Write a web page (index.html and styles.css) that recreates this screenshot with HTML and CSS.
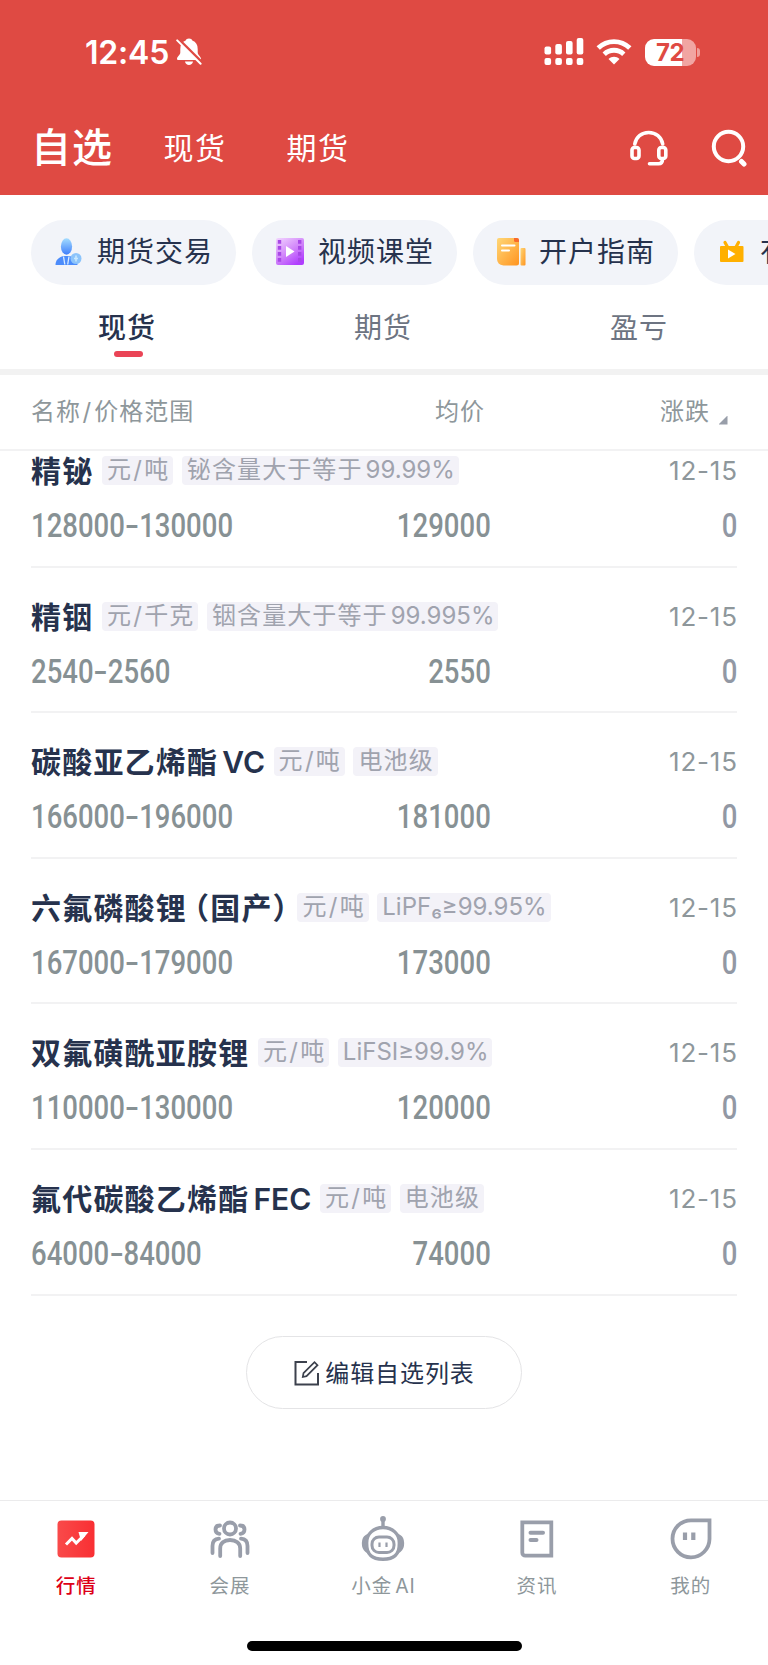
FILE: index.html
```html
<!DOCTYPE html>
<html lang="zh-CN">
<head>
    <meta charset="UTF-8">
    <meta name="viewport" content="width=device-width, initial-scale=1.0">
    <title>自选</title>
    <link rel="stylesheet" href="styles.css">
</head>
<body>
    <header class="header">
        <div class="status-bar">
            <span class="time">12:45</span>
            <svg class="bell" width="26" height="28" viewBox="0 0 26 28">
                <path d="M13 0.5c-1.8 0-3 .9-3.3 2.1C6 4 4.300 7 4.300 11v3.500c0 2.500-3.300 4-3.300 6.200 0 .8.5 1.300 1.400 1.300h21.200c.9 0 1.400-.5 1.400-1.300 0-2.200-3.300-3.700-3.300-6.200V11c0-4-1.700-7-5.400-8.400C16 1.400 14.800.5 13 .5zM9 23.500h8c-.3 2-2 3.500-4 3.500s-3.700-1.500-4-3.500z" fill="#fff"/>
                <path d="M2.800 1.500l24 24" stroke="#df4a43" stroke-width="3"/>
                <path d="M1.200 2.400l23.400 23.400" stroke="#fff" stroke-width="2" stroke-linecap="round"/>
            </svg>
            <svg class="signal" width="40" height="28" viewBox="0 0 40 28" fill="#fff">
                <rect x="0.500" y="8.500" width="6.600" height="8" rx="2"/>
                <rect x="11.300" y="6" width="6.600" height="10.500" rx="2"/>
                <rect x="22" y="3" width="6.600" height="13.500" rx="2"/>
                <rect x="32.700" y="0" width="6.600" height="16.500" rx="2"/>
                <rect x="0.500" y="20" width="6.600" height="7" rx="2"/>
                <rect x="11.300" y="20" width="6.600" height="7" rx="2"/>
                <rect x="22" y="20" width="6.600" height="7" rx="2"/>
                <rect x="32.700" y="20" width="6.600" height="7" rx="2"/>
            </svg>
            <svg class="wifi" width="36" height="26" viewBox="0 0 36 26">
                <path d="M2.200 9c9-8.600 22.600-8.600 31.600 0" fill="none" stroke="#fff" stroke-width="4.800"/>
                <path d="M8.200 15.200c5.600-5.300 14-5.300 19.600 0" fill="none" stroke="#fff" stroke-width="4.800"/>
                <path d="M12.500 20c3.200-3 7.800-3 11 0L18 25.500z" fill="#fff"/>
            </svg>
            <span class="battery">72</span>
            <span class="battery-cap"></span>
        </div>
        <nav class="main-nav">
            <a class="nav-item active">自选</a>
            <a class="nav-item">现货</a>
            <a class="nav-item">期货</a>
            <svg class="headset" width="38" height="38" viewBox="0 0 38 38" fill="none" stroke="#fff" stroke-width="3.600" stroke-linecap="round">
                <path d="M4.800 15C6 8 11.500 3.500 18.700 3.500S31.500 8 32.700 15"/>
                <rect x="2" y="18.500" width="7" height="11" rx="2.500"/>
                <rect x="28.800" y="18.500" width="7" height="11" rx="2.500"/>
                <path d="M32.500 30c0 3-1.500 4.800-4 4.800h-9"/>
            </svg>
            <svg width="38" height="38" viewBox="0 0 38 38" fill="none" stroke="#fff" stroke-width="4" stroke-linecap="round">
                <circle cx="18.500" cy="17.500" r="14.700"/>
                <path d="M31.500 32.500l2.500 2.500" stroke-width="5"/>
            </svg>
        </nav>
    </header>

    <section class="shortcuts">
        <a class="shortcut">
            <svg width="28" height="28" viewBox="0 0 28 28">
                <defs>
                    <linearGradient id="blue" x1="0" y1="0" x2="0" y2="1"><stop offset="0" stop-color="#a3dcff"/><stop offset="1" stop-color="#3f7efb"/></linearGradient>
                </defs>
                <ellipse cx="11.500" cy="8.500" rx="5.600" ry="8.200" fill="url(#blue)"/>
                <path d="M0.500 27c0-5 3-7.500 8-9h6c5 1.500 8 4 8 9z" fill="#4c8cfb"/>
                <path d="M8.500 18.500l1.300 8M14 18.500l-1.300 8" stroke="#d9ecff" stroke-width="1.300"/>
                <circle cx="21" cy="20.500" r="5.500" fill="#8cc4fb"/>
                <path d="M21 17.500v6M19 20.500h4" stroke="#c9e9ff" stroke-width="1.500"/>
            </svg>
            <span>期货交易</span>
        </a>
        <a class="shortcut">
            <svg width="28" height="28" viewBox="0 0 28 28">
                <defs>
                    <linearGradient id="purple" x1="0" y1="0" x2="0.700" y2="1"><stop offset="0" stop-color="#f3d6ff"/><stop offset="0.600" stop-color="#cf80fa"/><stop offset="1" stop-color="#b03dff"/></linearGradient>
                </defs>
                <rect width="28" height="27" rx="2" fill="url(#purple)"/>
                <path d="M3.500 2v24M23.700 2v24" stroke="#a848e6" stroke-width="3.400" stroke-dasharray="3.800 2.200"/>
                <path d="M10 8l8.500 5.500L10 19z" fill="#fff"/>
            </svg>
            <span>视频课堂</span>
        </a>
        <a class="shortcut">
            <svg width="30" height="28" viewBox="0 0 30 28">
                <defs>
                    <linearGradient id="orange" x1="0" y1="0" x2="1" y2="1"><stop offset="0" stop-color="#ffd777"/><stop offset="1" stop-color="#ff9420"/></linearGradient>
                </defs>
                <path d="M2 0h17.500a2.500 2.500 0 0 1 2.500 2.500V25a2.500 2.500 0 0 1-2.500 2.500H6.500Q0 26.500 0 21V2a2 2 0 0 1 2-2z" fill="url(#orange)"/>
                <path d="M17 0h3a2 2 0 0 1 2 2v2h-3.500A1.500 1.500 0 0 1 17 2.500z" fill="#f8692c"/>
                <path d="M5 7.500h12.500M5 12.500h7" stroke="#fff" stroke-width="2" stroke-linecap="round"/>
                <rect x="23.500" y="10" width="5" height="17.500" rx="1" fill="url(#orange)"/>
            </svg>
            <span>开户指南</span>
        </a>
        <a class="shortcut">
            <svg width="28" height="28" viewBox="0 0 28 28">
                <path d="M9.500 9L7 4.500M18 9l2.500-4.500" stroke="#ffb000" stroke-width="3.200" stroke-linecap="round"/>
                <rect x="2" y="8" width="23.500" height="16" rx="1" fill="#ffb000"/>
                <path d="M10 11.500l7.500 4.500-7.500 4.500z" fill="#fff"/>
            </svg>
            <span>有色直播</span>
        </a>
    </section>

    <nav class="tabs">
        <a class="tab active">现货</a>
        <a class="tab">期货</a>
        <a class="tab">盈亏</a>
    </nav>

    <div class="table-head">
        <span class="col-name">名称<i>/</i>价格范围</span>
        <span class="col-avg">均价</span>
        <span class="col-change">涨跌<b class="sort"></b></span>
    </div>

    <main class="list">
        <div class="item">
            <div class="title">
                <h2>精铋</h2>
                <span class="tag">元<i>/</i>吨</span>
                <span class="tag">铋含量大于等于<em>99.99%</em></span>
                <span class="date">12-15</span>
            </div>
            <div class="price">
                <span class="range">128000<i>-</i>130000</span>
                <span class="avg">129000</span>
                <span class="change">0</span>
            </div>
        </div>
        <div class="item">
            <div class="title">
                <h2>精铟</h2>
                <span class="tag">元<i>/</i>千克</span>
                <span class="tag">铟含量大于等于<em>99.995%</em></span>
                <span class="date">12-15</span>
            </div>
            <div class="price">
                <span class="range">2540<i>-</i>2560</span>
                <span class="avg">2550</span>
                <span class="change">0</span>
            </div>
        </div>
        <div class="item">
            <div class="title">
                <h2>碳酸亚乙烯酯<em>VC</em></h2>
                <span class="tag">元<i>/</i>吨</span>
                <span class="tag">电池级</span>
                <span class="date">12-15</span>
            </div>
            <div class="price">
                <span class="range">166000<i>-</i>196000</span>
                <span class="avg">181000</span>
                <span class="change">0</span>
            </div>
        </div>
        <div class="item">
            <div class="title">
                <h2>六氟磷酸锂<span class="paren">（</span>国产<span class="paren">）</span></h2>
                <span class="tag">元<i>/</i>吨</span>
                <span class="tag latin">LiPF₆≥99.95%</span>
                <span class="date">12-15</span>
            </div>
            <div class="price">
                <span class="range">167000<i>-</i>179000</span>
                <span class="avg">173000</span>
                <span class="change">0</span>
            </div>
        </div>
        <div class="item">
            <div class="title">
                <h2>双氟磺酰亚胺锂</h2>
                <span class="tag">元<i>/</i>吨</span>
                <span class="tag latin">LiFSI≥99.9%</span>
                <span class="date">12-15</span>
            </div>
            <div class="price">
                <span class="range">110000<i>-</i>130000</span>
                <span class="avg">120000</span>
                <span class="change">0</span>
            </div>
        </div>
        <div class="item">
            <div class="title">
                <h2>氟代碳酸乙烯酯<em>FEC</em></h2>
                <span class="tag">元<i>/</i>吨</span>
                <span class="tag">电池级</span>
                <span class="date">12-15</span>
            </div>
            <div class="price">
                <span class="range">64000<i>-</i>84000</span>
                <span class="avg">74000</span>
                <span class="change">0</span>
            </div>
        </div>
    </main>

    <button class="edit-btn">
        <svg width="26" height="26" viewBox="0 0 26 26" fill="none" stroke="#3c414d" stroke-width="2">
            <path d="M13 2H1.500v22.500H24V13"/>
            <path d="M9.500 13.200L20.500 2.200l3 3L12.500 16.200 8.800 17z" stroke-width="1.700"/>
        </svg>
        <span>编辑自选列表</span>
    </button>

    <footer class="tab-bar">
        <a class="bar-item active">
            <svg width="46" height="46" viewBox="0 0 46 46">
                <defs>
                    <linearGradient id="red" x1="0" y1="0" x2="1" y2="0"><stop offset="0" stop-color="#f94a4a"/><stop offset="1" stop-color="#f92f33"/></linearGradient>
                </defs>
                <rect x="4.500" y="4.500" width="37" height="37" rx="4" fill="url(#red)"/>
                <path d="M13 28.500l6-6 4.200 4.500 8-8" fill="none" stroke="#fff" stroke-width="3"/>
                <path d="M25.500 16H35.500L28 25z" fill="#fff"/>
            </svg>
            <span>行情</span>
        </a>
        <a class="bar-item">
            <svg width="46" height="46" viewBox="0 0 46 46" fill="none" stroke="#999eaa" stroke-width="3.800" stroke-linecap="round">
                <circle cx="23" cy="12.500" r="6"/>
                <path d="M13.200 40v-7.500C13.200 27 17 24 23 24s10.200 3 10.200 8.500V40"/>
                <path d="M13 9.500c-3 0-4.500 1.600-4.500 4s1.500 4 4 4.300M33 9.500c3 0 4.500 1.600 4.500 4s-1.500 4-4 4.300"/>
                <path d="M5.500 37v-7c0-4.500 2-7 6.500-7.300M40.500 37v-7c0-4.500-2-7-6.500-7.300"/>
            </svg>
            <span>会展</span>
        </a>
        <a class="bar-item">
            <svg width="46" height="46" viewBox="0 0 46 46" fill="none" stroke="#999eaa" stroke-width="3.400">
                <circle cx="23" cy="3" r="2.900" fill="#999eaa" stroke="none"/>
                <path d="M23 4v7"/>
                <path d="M6.500 20.500c-3.600 2-4.300 11 0 14zM39.500 20.500c3.600 2 4.300 11 0 14z" fill="#999eaa"/>
                <path d="M23 11.500c-9.500 0-16.500 6.500-16.500 15.500 0 12.500 6.500 16.300 16.500 16.300S39.500 39.500 39.500 27c0-9-7-15.500-16.500-15.500z"/>
                <rect x="12" y="21" width="22" height="15.500" rx="7" stroke-width="3"/>
                <path d="M19.500 26.500v4.500M26.500 26.500v4.500" stroke-width="2.200"/>
            </svg>
            <span>小金<em>AI</em></span>
        </a>
        <a class="bar-item">
            <svg width="46" height="46" viewBox="0 0 46 46" fill="none" stroke="#999eaa" stroke-width="3.800">
                <path d="M8.300 6.300h29v33.400h-26a3 3 0 0 1-3-3z"/>
                <path d="M16.500 16.800h12.500M16.500 24h6" stroke-width="4" stroke-linecap="round"/>
            </svg>
            <span>资讯</span>
        </a>
        <a class="bar-item">
            <svg width="46" height="46" viewBox="0 0 46 46" fill="none" stroke="#999eaa" stroke-width="3.800">
                <path d="M23 4.300h18.500V23A18.500 18.500 0 1 1 23 4.300z"/>
                <path d="M17 16.500v7.500M25.300 16.500v7.500" stroke-width="4.200"/>
            </svg>
            <span>我的</span>
        </a>
    </footer>
    <div class="home-indicator"></div>
</body>
</html>
```
FILE: styles.css
```css
* {
    box-sizing: border-box;
}

body {
    margin: 0;
    width: 768px;
    height: 1665px;
    overflow: hidden;
    display: flex;
    flex-direction: column;
    background-color: #fff;
    color: #26324d;
    font-family: 'Inter', 'Noto Sans CJK SC', sans-serif;
}

i, em, b {
    font-style: normal;
    font-weight: inherit;
}

svg {
    display: block;
    flex: none;
}

/* 顶部 */
.header {
    height: 195px;
    flex: none;
    background-color: #df4a43;
    color: #fff;
}

.status-bar {
    display: flex;
    align-items: center;
    height: 104px;
    padding: 0 68px 0 85px;
}

.time {
    font-size: 32px;
    font-weight: 600;
    letter-spacing: -0.2px;
}

.bell {
    margin-left: 7px;
}

.signal {
    margin-left: auto;
}

.wifi {
    margin-left: 12px;
}

.battery {
    width: 51px;
    height: 27px;
    margin-left: 13px;
    border-radius: 9px;
    background: linear-gradient(90deg, #fff 37px, #f1a5a2 37px);
    color: #df4a43;
    font-size: 24px;
    font-weight: 700;
    line-height: 28px;
    letter-spacing: -0.5px;
    text-align: center;
}

.battery-cap {
    width: 3.500px;
    height: 9px;
    margin-left: 1px;
    border-radius: 0 4px 4px 0;
    background-color: #ef9f9b;
}

.main-nav {
    display: flex;
    align-items: center;
    height: 88px;
    padding: 0 20px 0 31px;
}

.nav-item {
    margin-right: 60px;
    font-size: 30px;
    font-weight: 400;
    letter-spacing: 1.500px;
    line-height: 44px;
}

.nav-item.active {
    margin-right: 50.500px;
    font-size: 40px;
    font-weight: 500;
    letter-spacing: 1px;
}

.headset {
    margin-left: auto;
    margin-right: 42px;
}

/* 快捷入口 */
.shortcuts {
    display: flex;
    flex: none;
    gap: 16.500px;
    padding: 24.500px 0 0 31px;
    overflow: hidden;
}

.shortcut {
    display: flex;
    align-items: center;
    flex: none;
    width: 204.500px;
    height: 65.500px;
    padding-left: 23.500px;
    border-radius: 33px;
    background-color: #f2f4f9;
    font-size: 28px;
    letter-spacing: 1px;
    line-height: 40px;
    white-space: nowrap;
}

.shortcut span {
    width: 120px;
    margin-left: auto;
    margin-right: 18.500px;
    padding-bottom: 1px;
}

/* 分类切换 */
.tabs {
    display: flex;
    flex: none;
    height: 90px;
    border-bottom: 6px solid #f2f2f2;
}

.tab {
    display: flex;
    flex: 1;
    flex-direction: column;
    align-items: center;
    padding: 23px 2px 0 0;
    color: #6d7482;
    font-size: 28px;
    letter-spacing: 1px;
    line-height: 40px;
}

.tab.active {
    color: #26324d;
    font-weight: 500;
}

.tab.active::after {
    content: "";
    width: 29px;
    height: 6px;
    margin: 3px 0 0 2px;
    border-radius: 3px;
    background-color: #ea4456;
}

.table-head {
    display: flex;
    flex: none;
    align-items: center;
    height: 76px;
    padding: 0 31px 6px;
    border-bottom: 2px solid #f2f2f3;
    color: #8e979b;
    font-size: 24px;
    letter-spacing: 1px;
}

.table-head i {
    margin: 0 2px 0 1.500px;
}

.col-name,
.range {
    width: 260px;
}

.col-avg {
    width: 194px;
    text-align: right;
}

.col-change {
    display: flex;
    flex: 1;
    align-items: center;
    justify-content: flex-end;
    padding-right: 9.500px;
}

.sort {
    width: 9px;
    height: 9px;
    margin: 22px 0 0 8.500px;
    background-color: #989ea9;
    clip-path: polygon(100% 0, 100% 100%, 0 100%);
}

/* 行情列表 */
.list {
    flex: none;
    padding: 0 31px;
    overflow: hidden;
}

.item {
    height: 145.600px;
    padding-top: 34px;
    border-bottom: 2px solid #f2f2f3;
}

.item:first-child {
    margin-top: -29px;
}

.title {
    display: flex;
    align-items: center;
    height: 29px;
    white-space: nowrap;
}

.title h2 {
    margin: 0 8.600px 3px 0;
    font-size: 30px;
    font-weight: 600;
    letter-spacing: 1.200px;
}

.title h2 em {
    margin-left: 4px;
    letter-spacing: 0;
}

/* 半宽括号 */
.paren {
    font-feature-settings: "halt";
}

.paren:first-child {
    margin-left: 7px;
}

.tag {
    height: 29px;
    margin-right: 8.500px;
    padding: 0 4px 0 5px;
    border-radius: 4px;
    background-color: #f3f2f8;
    color: #a0a3ae;
    font-size: 24px;
    font-weight: 400;
    letter-spacing: 1.100px;
    line-height: 27px;
}

.tag i {
    margin: 0 1.200px;
}

.tag em {
    margin-left: 3px;
    letter-spacing: 0;
}

.tag.latin {
    letter-spacing: 0;
}

.date {
    margin-left: auto;
    margin-right: -0.800px;
    color: #8e979b;
    font-size: 26px;
    letter-spacing: 0.800px;
}

.price {
    display: flex;
    margin-top: 20px;
    color: #879194;
    font-family: 'Roboto', sans-serif;
    font-size: 34px;
    font-weight: 500;
    line-height: 40px;
}

/* 数字压窄 */
.price span {
    transform: scaleX(0.81);
}

.price i {
    display: inline-block;
    margin: 0 3px;
    transform: scaleX(1.500);
}

.price .range {
    transform-origin: left;
}

.price .avg {
    width: 199.800px;
    text-align: right;
    transform-origin: right;
}

.price .change {
    margin-left: auto;
    color: #9298a4;
    transform-origin: right;
}

.edit-btn {
    display: flex;
    flex: none;
    align-items: center;
    justify-content: center;
    gap: 5px;
    width: 276px;
    height: 73px;
    margin: 40.500px auto 0;
    padding: 0 5px 0 6px;
    border: 1.500px solid #e4e4e6;
    border-radius: 37px;
    background-color: #fff;
    color: #26324d;
    font-family: inherit;
    font-size: 24px;
    letter-spacing: 0.900px;
}

.edit-btn span {
    padding-bottom: 3px;
}

/* 底部导航 */
.tab-bar {
    display: flex;
    flex: none;
    height: 141px;
    margin-top: auto;
    border-top: 1px solid #ebebec;
}

.bar-item {
    display: flex;
    flex: 1;
    flex-direction: column;
    align-items: center;
    padding: 15px 1px 0 0;
    color: #8e979b;
    font-size: 19.500px;
    letter-spacing: 1px;
    line-height: 28px;
}

.bar-item span {
    margin-top: 10px;
}

.bar-item em {
    margin-left: 3px;
}

.bar-item.active {
    color: #dd0017;
    font-weight: 500;
}

.home-indicator {
    flex: none;
    width: 275px;
    height: 10px;
    margin: 0 auto 14px;
    border-radius: 5px;
    background-color: #000;
}
```
